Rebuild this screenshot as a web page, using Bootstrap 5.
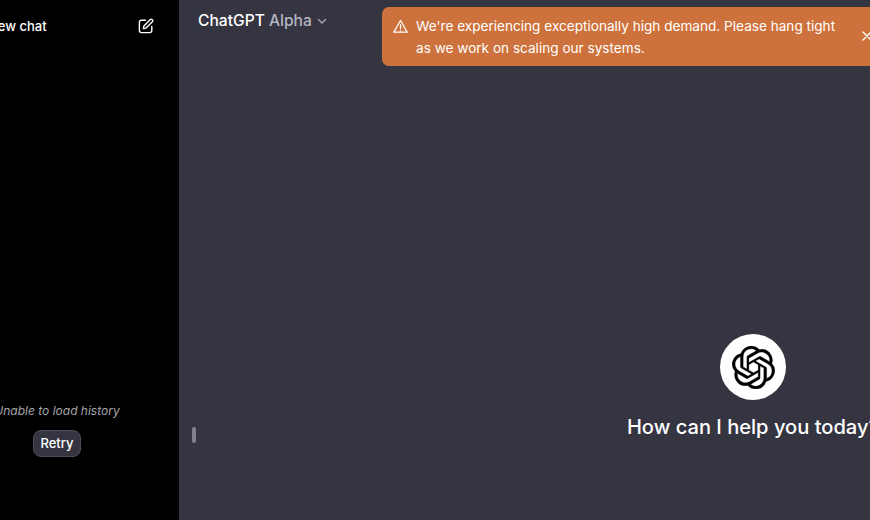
<!DOCTYPE html>
<html lang="en">

<head>
    <meta charset="UTF-8">
    <meta name="viewport" content="width=device-width, initial-scale=1.0">
    <title>ChatGPT</title>
    <link href="https://cdn.jsdelivr.net/npm/bootstrap@5.3.2/dist/css/bootstrap.min.css" rel="stylesheet">
    <style>
        html, body { height: 100%; overflow: hidden; }
        body { background: #343541; font-family: Inter, "Liberation Sans", sans-serif; }
        .app-shell { width: 1392px; height: 520px; margin-left: -65px; }
        .side-panel { width: 244px; background: #000; color: #fff; }
        .new-chat { padding: 17px 25px 0 53px; height: 60px; font-size: 13px; font-weight: 500; }
        .new-chat svg { margin-top: 1px; }
        .history-note { color: #a4a4ac; font-size: 12px; font-style: italic; margin-bottom: 10px; margin-top: 1px; }
        .retry-btn { background: #343541; color: #fff; border: 1px solid #4d4d5c; border-radius: 8px; font-size: 13px; font-weight: 500; padding: 4px 6px; line-height: 17px; }
        .history-box { padding-bottom: 63px; }
        .main-panel { position: relative; color: #fff; }
        .model-name { padding: 9px 0 0 19px; font-size: 15.6px; font-weight: 500; line-height: 24px; }
        .model-name span { color: #b4b4c0; font-weight: 500; }
        .model-caret { margin-left: 1px; }
        .alert-banner { position: absolute; left: 203px; top: 7px; width: 560px; height: 59px; background: #ce723d; border-radius: 7px; color: #fff; font-size: 13.6px; line-height: 22px; padding: 8px 0 0 11px; }
        .banner-close { position: absolute; left: 480px; top: 24px; }
        .resize-handle { position: absolute; left: 13px; top: 427px; width: 4px; height: 16px; background: #7f7f8e; border-radius: 2px; }
        .welcome-block { padding-top: 301px; }
        .logo-circle { width: 66px; height: 66px; background: #fff; }
        .welcome-title { font-size: 20.1px; font-weight: 500; line-height: 28px; margin: 13px 0 0; }
    </style>
</head>

<body>
    <div class="app-shell d-flex">
        <!-- Sidebar -->
        <div class="side-panel d-flex flex-column flex-shrink-0">
            <div class="new-chat d-flex justify-content-between align-items-start">
                <span>New chat</span>
                <svg width="16" height="16" viewBox="0 0 16 16" fill="none" stroke="#fff" stroke-width="1.4" stroke-linecap="round" stroke-linejoin="round">
                    <path d="M7.5 2.2H3.4a2 2 0 0 0-2 2v8.4a2 2 0 0 0 2 2h8.4a2 2 0 0 0 2-2V8.5"/>
                    <path d="M5.4 10.6l.5-2.6 6.4-6.4a1.3 1.3 0 0 1 1.9 0l.2.2a1.3 1.3 0 0 1 0 1.9L8 10.1z"/>
                </svg>
            </div>
            <div class="history-box mt-auto d-flex flex-column align-items-center">
                <div class="history-note">Unable to load history</div>
                <button type="button" class="retry-btn">Retry</button>
            </div>
        </div>

        <!-- Main area -->
        <div class="main-panel flex-grow-1">
            <div class="model-name d-flex align-items-center gap-1">
                <div>ChatGPT <span>Alpha</span></div>
                <svg class="model-caret" width="10" height="10" viewBox="0 0 10 10" fill="none" stroke="#a9a9b8" stroke-width="1.3" stroke-linecap="round" stroke-linejoin="round">
                    <path d="M1.5 3.5L5 7l3.5-3.5"/>
                </svg>
            </div>

            <div class="alert-banner d-flex gap-2">
                <svg class="flex-shrink-0 mt-1" width="15" height="15" viewBox="0 0 16 16" fill="none" stroke="#fff" stroke-width="1.3" stroke-linecap="round" stroke-linejoin="round">
                    <path d="M8 1.6L.9 14h14.2z"/>
                    <path d="M8 6v4M8 12.2v.1"/>
                </svg>
                <div>We're experiencing exceptionally high demand. Please hang tight<br>as we work on scaling our systems.</div>
                <svg class="banner-close" width="10" height="10" viewBox="0 0 10 10" fill="none" stroke="#fff" stroke-width="1.4" stroke-linecap="round">
                    <path d="M1 1l8 8M9 1L1 9"/>
                </svg>
            </div>

            <div class="resize-handle"></div>

            <div class="welcome-block d-flex flex-column align-items-center">
                <div class="logo-circle rounded-circle d-flex align-items-center justify-content-center">
                    <svg width="43" height="43" viewBox="0 0 24 24" fill="#000" stroke="#000" stroke-width="0.15">
                        <path d="M22.2819 9.8211a5.9847 5.9847 0 0 0-.5157-4.9108 6.0462 6.0462 0 0 0-6.5098-2.9A6.0651 6.0651 0 0 0 4.9807 4.1818a5.9847 5.9847 0 0 0-3.9977 2.9 6.0462 6.0462 0 0 0 .7427 7.0966 5.98 5.98 0 0 0 .511 4.9107 6.051 6.051 0 0 0 6.5146 2.9001A5.9847 5.9847 0 0 0 13.2599 24a6.0557 6.0557 0 0 0 5.7718-4.2058 5.9894 5.9894 0 0 0 3.9977-2.9001 6.0557 6.0557 0 0 0-.7475-7.0729zm-9.022 12.6081a4.4755 4.4755 0 0 1-2.8764-1.0408l.1419-.0804 4.7783-2.7582a.7948.7948 0 0 0 .3927-.6813v-6.7369l2.02 1.1686a.071.071 0 0 1 .038.052v5.5826a4.504 4.504 0 0 1-4.4945 4.4944zm-9.6607-4.1254a4.4708 4.4708 0 0 1-.5346-3.0137l.142.0852 4.783 2.7582a.7712.7712 0 0 0 .7806 0l5.8428-3.3685v2.3324a.0804.0804 0 0 1-.0332.0615L9.74 19.9502a4.4992 4.4992 0 0 1-6.1408-1.6464zM2.3408 7.8956a4.485 4.485 0 0 1 2.3655-1.9728V11.6a.7664.7664 0 0 0 .3879.6765l5.8144 3.3543-2.0201 1.1685a.0757.0757 0 0 1-.071 0l-4.8303-2.7865A4.504 4.504 0 0 1 2.3408 7.872zm16.5963 3.8558L13.1038 8.364 15.1192 7.2a.0757.0757 0 0 1 .071 0l4.8303 2.7913a4.4944 4.4944 0 0 1-.6765 8.1042v-5.6772a.79.79 0 0 0-.407-.667zm2.0107-3.0231l-.142-.0852-4.7735-2.7818a.7759.7759 0 0 0-.7854 0L9.409 9.2297V6.8974a.0662.0662 0 0 1 .0284-.0615l4.8303-2.7866a4.4992 4.4992 0 0 1 6.6802 4.66zM8.3065 12.863l-2.02-1.1638a.0804.0804 0 0 1-.038-.0567V6.0742a4.4992 4.4992 0 0 1 7.3757-3.4537l-.142.0805L8.704 5.459a.7948.7948 0 0 0-.3927.6813zm1.0976-2.3654l2.602-1.4998 2.6069 1.4998v2.9994l-2.5974 1.4997-2.6067-1.4997Z"/>
                    </svg>
                </div>
                <h2 class="welcome-title">How can I help you today?</h2>
            </div>
        </div>
    </div>

    <script src="https://cdn.jsdelivr.net/npm/bootstrap@5.3.2/dist/js/bootstrap.bundle.min.js"></script>
</body>

</html>
